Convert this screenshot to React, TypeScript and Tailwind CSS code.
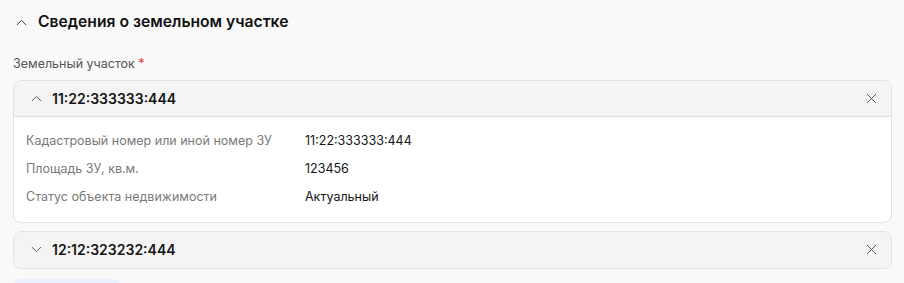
import { ChevronDown, ChevronUp, X } from "lucide-react";

const ROWS: { label: string; value: string }[] = [
  { label: "Кадастровый номер или иной номер ЗУ", value: "11:22:333333:444" },
  { label: "Площадь ЗУ, кв.м.", value: "123456" },
  { label: "Статус объекта недвижимости", value: "Актуальный" },
];

function ParcelCard({ number, open, children }: { number: string; open: boolean; children?: React.ReactNode }) {
  return (
    <div className="rounded-lg border border-[#e2e2e2] bg-white overflow-hidden">
      <div className={`flex h-[36px] items-center bg-[#f4f4f4] pl-[14px] pr-[11px] ${open ? "border-b border-[#e2e2e2]" : ""}`}>
        {open ? (
          <ChevronUp size={17} strokeWidth={1.4} className="text-[#555]" />
        ) : (
          <ChevronDown size={17} strokeWidth={1.4} className="text-[#555]" />
        )}
        <span className="ml-[7px] text-[14px] font-semibold text-[#151515]">{number}</span>
        <X size={17} strokeWidth={1.4} className="ml-auto text-[#555]" />
      </div>
      {children}
    </div>
  );
}

export default function App() {
  return (
    <div className="h-[283px] overflow-hidden bg-[#f9f9f9] px-[13px] pt-[12px] font-['Inter',sans-serif] w-[904px]">
      <div className="flex items-center h-[20px]">
        <ChevronUp size={17} strokeWidth={1.4} className="text-[#333]" />
        <h2 className="ml-[8px] text-[15.7px] font-semibold text-[#111]">Сведения о земельном участке</h2>
      </div>
      <div className="mt-[23px] text-[12.5px] text-[#555]">
        Земельный участок <span className="text-[#d33]">*</span>
      </div>
      <div className="mt-[6px] flex flex-col gap-[8px] w-[879px]">
        <ParcelCard number="11:22:333333:444" open>
          <div className="flex flex-col gap-[11px] px-[12px] pt-[15px] pb-[17px]">
            {ROWS.map((r) => (
              <div key={r.label} className="flex text-[12.5px] leading-[17px]">
                <span className="w-[279px] text-[#7a7a7a]">{r.label}</span>
                <span className="text-[#151515]">{r.value}</span>
              </div>
            ))}
          </div>
        </ParcelCard>
        <ParcelCard number="12:12:323232:444" open={false} />
      </div>
      <div className="mt-[10px] ml-[1px] h-[30px] w-[106px] rounded-md bg-[#e8f1fd]" />
    </div>
  );
}
